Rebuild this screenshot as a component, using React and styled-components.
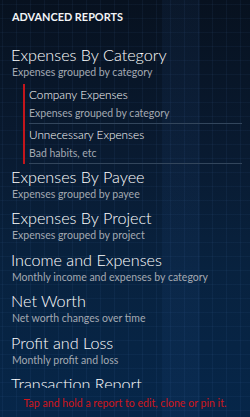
import React from "react";
import styled, { createGlobalStyle } from "styled-components";

const Global = createGlobalStyle`
  html, body { margin: 0; padding: 0; background: #071a33; }
  body { font-family: Lato, "Open Sans", sans-serif; }
  * { box-sizing: border-box; }
`;

const Screen = styled.div`
  width: 250px;
  height: 417px;
  display: flex;
  flex-direction: column;
  overflow: hidden;
  color: #fff;
  background-color: #07203f;
  background-image:
    repeating-linear-gradient(90deg, transparent 0 2px, rgba(90,140,210,0.07) 2px 3px, transparent 3px 14px),
    repeating-linear-gradient(180deg, transparent 0 4px, rgba(90,140,210,0.06) 4px 5px, transparent 5px 14px),
    linear-gradient(90deg, transparent 0 162px, rgba(40,90,160,0.09) 162px 200px, transparent 200px),
    linear-gradient(180deg, #07111f 0%, #091a30 35%, #08223f 65%, #062649 100%);
`;

const Header = styled.div`
  flex: none;
  height: 45px;
  padding: 9px 12px 0;
  font-size: 10.9px;
  line-height: 16px;
  font-weight: 700;
  color: #f2f4f7;
`;

const List = styled.div`
  flex: 1;
  overflow: hidden;
`;

const Item = styled.div`
  padding: 0 12px ${(p) => (p.$nested ? "3px" : "7.4px")} 11px;
`;

const Title = styled.div`
  font-size: 16.2px;
  line-height: 20px;
  font-weight: 300;
  color: #fff;
  white-space: nowrap;
`;

const Sub = styled.div`
  font-size: 10.5px;
  line-height: 14px;
  color: #a3a9b2;
  padding-left: 1px;
  white-space: nowrap;
`;

const Group = styled.div`
  margin: 5px -4px 0 12px;
  border-left: 2px solid #c3161c;
  padding-left: 4px;
`;

const SubItem = styled.div`
  padding: 2px 0 3px;
  border-bottom: 1px solid #33465c;
`;

const SubTitle = styled.div`
  font-size: 11.75px;
  line-height: 18px;
  font-weight: 300;
  color: #fff;
`;

const SubSub = styled.div`
  margin-top: 2px;
  font-size: 10.5px;
  line-height: 14px;
  color: #a3a9b2;
`;

const Footer = styled.div`
  flex: none;
  height: 29px;
  display: flex;
  align-items: center;
  justify-content: center;
  font-size: 10.6px;
  color: #d0161c;
`;

const reports = [
  { title: "Expenses By Payee", sub: "Expenses grouped by payee" },
  { title: "Expenses By Project", sub: "Expenses grouped by project" },
  { title: "Income and Expenses", sub: "Monthly income and expenses by category" },
  { title: "Net Worth", sub: "Net worth changes over time" },
  { title: "Profit and Loss", sub: "Monthly profit and loss" },
  { title: "Transaction Report", sub: "All transactions" },
];

export default function App() {
  return (
    <>
      <Global />
      <Screen>
        <Header>ADVANCED REPORTS</Header>
        <List>
          <Item $nested>
            <Title>Expenses By Category</Title>
            <Sub>Expenses grouped by category</Sub>
            <Group>
              <SubItem>
                <SubTitle>Company Expenses</SubTitle>
                <SubSub>Expenses grouped by category</SubSub>
              </SubItem>
              <SubItem>
                <SubTitle>Unnecessary Expenses</SubTitle>
                <SubSub>Bad habits, etc</SubSub>
              </SubItem>
            </Group>
          </Item>
          {reports.map((r) => (
            <Item key={r.title}>
              <Title>{r.title}</Title>
              <Sub>{r.sub}</Sub>
            </Item>
          ))}
        </List>
        <Footer>Tap and hold a report to edit, clone or pin it.</Footer>
      </Screen>
    </>
  );
}
